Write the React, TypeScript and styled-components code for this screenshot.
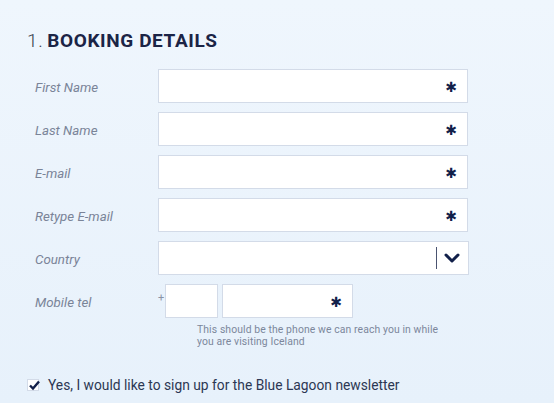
import React, { useState } from "react";
import styled, { createGlobalStyle } from "styled-components";

const GlobalStyle = createGlobalStyle`
    html, body {
        margin: 0;
        padding: 0;
    }
    body {
        font-family: "Roboto", "Liberation Sans", sans-serif;
        background: linear-gradient(180deg, #eff6fd 0%, #e7f1fb 100%);
        min-height: 403px;
    }
`;

const StyledPage = styled.div`
    width: 554px;
    height: 403px;
    box-sizing: border-box;
    padding: 30px 0 0 27px;
    background: linear-gradient(180deg, #eff6fd 0%, #e7f1fb 100%);

    .title {
        margin: 0 0 17px 0;
        font-size: 19px;
        line-height: 22px;
        color: #1b2446;
        letter-spacing: 0.6px;
        font-weight: 700;

        .num {
            font-weight: 300;
            color: #3a3f4e;
            margin-right: 4px;
        }
    }
`;

const Fields = styled.div`
    display: flex;
    flex-direction: column;
    gap: 9px;
    padding-left: 8px;
`;

const Row = styled.div`
    display: grid;
    grid-template-columns: 123px auto;
    align-items: center;
`;

const Label = styled.label`
    font-size: 13.3px;
    font-style: italic;
    color: #7a8498;
    margin-top: 2px;
`;

const Box = styled.div<{ $width: number }>`
    position: relative;
    width: ${(p) => p.$width}px;
    height: 34px;
    box-sizing: border-box;
    background: #ffffff;
    border: 1px solid #d3dbe8;
    display: flex;
    align-items: center;
    justify-content: flex-end;
`;

const Asterisk = styled.span`
    font-family: "DejaVu Sans", sans-serif;
    font-weight: 700;
    font-size: 14px;
    color: #12204a;
    margin-right: 10px;
    margin-top: 2px;
`;

const Divider = styled.span`
    width: 1px;
    height: 22px;
    background: #4a5370;
    margin-right: 7px;
`;

const Chevron = styled.svg`
    width: 16px;
    height: 10px;
    margin-right: 8px;
`;

const Phone = styled.div`
    display: flex;
    align-items: center;
    gap: 4px;

    .plus {
        font-size: 11px;
        color: #8a93a6;
        margin-right: -4px;
        margin-top: -8px;
        width: 7px;
    }
`;

const Hint = styled.div`
    margin: 6px 0 0 162px;
    font-size: 10.4px;
    line-height: 12px;
    letter-spacing: 0.1px;
    color: #7c879b;
    width: 260px;
`;

const Newsletter = styled.label`
    display: flex;
    align-items: center;
    gap: 9px;
    margin-top: 29px;
    font-size: 13.8px;
    color: #2c3753;
    cursor: pointer;
`;

const Check = styled.span`
    width: 12px;
    height: 12px;
    box-sizing: border-box;
    background: #ffffff;
    border: 1px solid #d3dbe8;
    position: relative;

    svg {
        position: absolute;
        left: 0px;
        top: -1px;
    }
`;

const fields = ["First Name", "Last Name", "E-mail", "Retype E-mail"];

const App = () => {
    const [subscribed, setSubscribed] = useState(true);

    return (
        <StyledPage>
            <GlobalStyle />
            <h2 className="title">
                <span className="num">1.</span>BOOKING DETAILS
            </h2>
            <Fields>
                {fields.map((f) => (
                    <Row key={f}>
                        <Label>{f}</Label>
                        <Box $width={310}>
                            <Asterisk>✱</Asterisk>
                        </Box>
                    </Row>
                ))}
                <Row>
                    <Label>Country</Label>
                    <Box $width={311}>
                        <Divider />
                        <Chevron viewBox="0 0 16 10">
                            <path d="M2 2 L8 8 L14 2" fill="none" stroke="#12204a" strokeWidth="3" strokeLinecap="round" strokeLinejoin="round" />
                        </Chevron>
                    </Box>
                </Row>
                <div>
                    <Row>
                        <Label>Mobile tel</Label>
                        <Phone>
                            <span className="plus">+</span>
                            <Box $width={53} />
                            <Box $width={131}>
                                <Asterisk>✱</Asterisk>
                            </Box>
                        </Phone>
                    </Row>
                    <Hint>
                        This should be the phone we can reach you in while
                        <br />
                        you are visiting Iceland
                    </Hint>
                </div>
            </Fields>
            <Newsletter onClick={() => setSubscribed(!subscribed)}>
                <Check>
                    {subscribed && (
                        <svg width="13" height="12" viewBox="0 0 13 12">
                            <path d="M2 6.5 L5 9.5 L11 2.5" fill="none" stroke="#12204a" strokeWidth="2.4" />
                        </svg>
                    )}
                </Check>
                Yes, I would like to sign up for the Blue Lagoon newsletter
            </Newsletter>
        </StyledPage>
    );
};

export default App;
